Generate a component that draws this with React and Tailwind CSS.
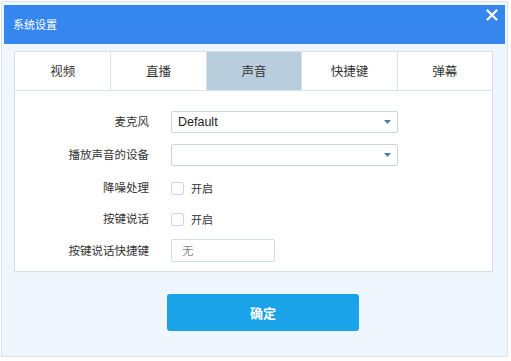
const TABS = ['视频', '直播', '声音', '快捷键', '弹幕'];

const FONT = { fontFamily: '"Microsoft YaHei", "Noto Sans CJK SC", "Liberation Sans", sans-serif' };

function Arrow() {
  return (
    <svg width="7" height="4" viewBox="0 0 7 4" className="shrink-0">
      <path d="M0 0 L7 0 L3.5 4 Z" fill="#4f7bb5" />
    </svg>
  );
}

function Row({ label, children, className = '' }) {
  return (
    <div className={`flex items-center h-[22px] ${className}`}>
      <div className="w-[134px] text-right text-[11.5px] text-[#333]">{label}</div>
      <div className="ml-[22px] flex items-center">{children}</div>
    </div>
  );
}

function Select({ value }) {
  return (
    <div className="flex h-[22px] w-[227px] items-center justify-between rounded-[2px] border border-[#c8d4e0] bg-white pl-[6px] pr-[6px]">
      <span className="text-[12.5px] text-[#222]" style={{ fontFamily: '"Liberation Sans", sans-serif' }}>
        {value}
      </span>
      <Arrow />
    </div>
  );
}

function Check() {
  return (
    <div className="flex items-center">
      <div className="h-[13px] w-[13px] rounded-[2px] border border-[#cfd6dd] bg-white" />
      <span className="ml-[7px] text-[11px] text-[#333]">开启</span>
    </div>
  );
}

export default function App() {
  return (
    <div className="h-[361px] w-[511px] bg-white pl-[1px] pt-[1px]" style={FONT}>
      <div className="flex h-[356px] w-[507px] flex-col border border-[#dde3ea] bg-[#f0f6fd] px-[2px] pt-[3px]">
        <div className="relative flex h-[39px] items-center bg-[#3586ee] pl-[9px]">
          <span className="text-[11px] text-white">系统设置</span>
          <svg className="absolute right-[7px] top-[4px]" width="12" height="12" viewBox="0 0 12 12">
            <path d="M1.5 1.5 L10.5 10.5 M10.5 1.5 L1.5 10.5" stroke="white" strokeWidth="2.2" strokeLinecap="round" />
          </svg>
        </div>

        <div className="ml-[10px] mt-[7px] h-[221px] w-[479px] border border-[#d6dde4] bg-white">
          <div className="grid h-[39px] grid-cols-5 border-b border-[#dbe2e8]">
            {TABS.map((t, i) => (
              <div
                key={t}
                className={`flex items-center justify-center text-[12.5px] text-[#333] ${
                  i > 0 ? 'border-l border-[#dbe2e8]' : ''
                } ${i === 2 ? 'bg-[#b8cedc]' : 'bg-white'}`}
              >
                {t}
              </div>
            ))}
          </div>

          <div className="pt-[20px]">
            <Row label="麦克风">
              <Select value="Default" />
            </Row>
            <Row label="播放声音的设备" className="mt-[11px]">
              <Select value="" />
            </Row>
            <Row label="降噪处理" className="mt-[11px]">
              <Check />
            </Row>
            <Row label="按键说话" className="mt-[9px]">
              <Check />
            </Row>
            <Row label="按键说话快捷键" className="mt-[9px] h-[23px]">
              <div className="flex h-[23px] w-[104px] items-center rounded-[2px] border border-[#cfdbe6] bg-white pl-[10px] text-[11.5px] text-[#888]">
                无
              </div>
            </Row>
          </div>
        </div>

        <div className="flex pt-[22px]">
          <button className="ml-[163px] h-[37px] w-[192px] rounded-[3px] bg-[#1ba3ea] text-[13px] font-bold text-white">
            确定
          </button>
        </div>
      </div>
    </div>
  );
}
